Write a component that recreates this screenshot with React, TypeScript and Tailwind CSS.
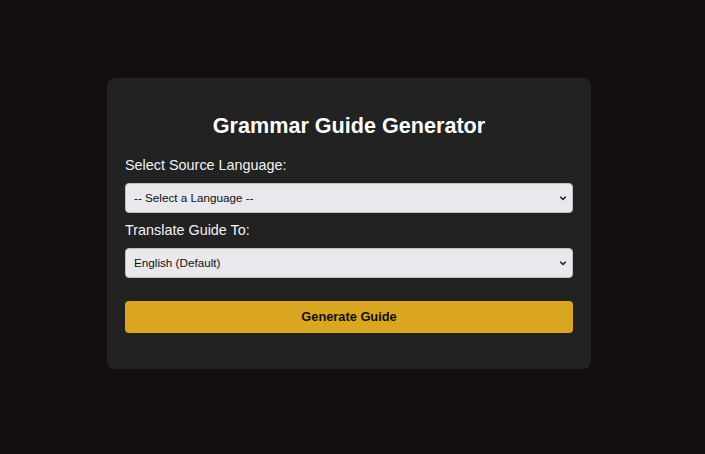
import React from "react"

function Chevron() {
  return (
    <svg
      className="absolute right-[6px] top-1/2 -translate-y-1/2 pointer-events-none"
      width="8"
      height="6"
      viewBox="0 0 8 6"
      fill="none"
    >
      <path d="M1.2 1.8 L4 4.4 L6.8 1.8" stroke="#222" strokeWidth="1.5" />
    </svg>
  )
}

function SelectField({ label, options, value }: { label: string; options: string[]; value: string }) {
  return (
    <div className="flex flex-col">
      <label className="text-[14.4px] leading-[18px] text-[#f2f2f2]">{label}</label>
      <div className="relative mt-[9px]">
        <select
          defaultValue={value}
          className="w-full h-[30px] appearance-none rounded-[4px] border border-[#bdbdc2] bg-[#e8e8ed] pl-[8px] pr-6 text-[11.7px] text-[#111] font-['Liberation_Sans',sans-serif] outline-none"
        >
          {options.map((o) => (
            <option key={o}>{o}</option>
          ))}
        </select>
        <Chevron />
      </div>
    </div>
  )
}

export default function App() {
  return (
    <div className="h-[454px] w-full bg-[#120e0e] flex items-center justify-center pr-[7px] pb-[7px] font-['Liberation_Sans',Arial,sans-serif]">
      <div className="w-[484px] rounded-[8px] bg-[#222222] px-[18px] pt-[36px] pb-[36px]">
        <h2 className="text-center text-[21.6px] leading-[24px] font-bold text-white">Grammar Guide Generator</h2>
        <div className="mt-[18px] flex flex-col gap-[8px]">
          <SelectField
            label="Select Source Language:"
            value="-- Select a Language --"
            options={["-- Select a Language --", "Spanish", "French", "German", "Japanese"]}
          />
          <SelectField
            label="Translate Guide To:"
            value="English (Default)"
            options={["English (Default)", "Spanish", "French"]}
          />
        </div>
        <button className="mt-[23px] w-full h-[32px] rounded-[4px] bg-[#daa520] text-[12.8px] font-bold text-[#111]">
          Generate Guide
        </button>
      </div>
    </div>
  )
}
